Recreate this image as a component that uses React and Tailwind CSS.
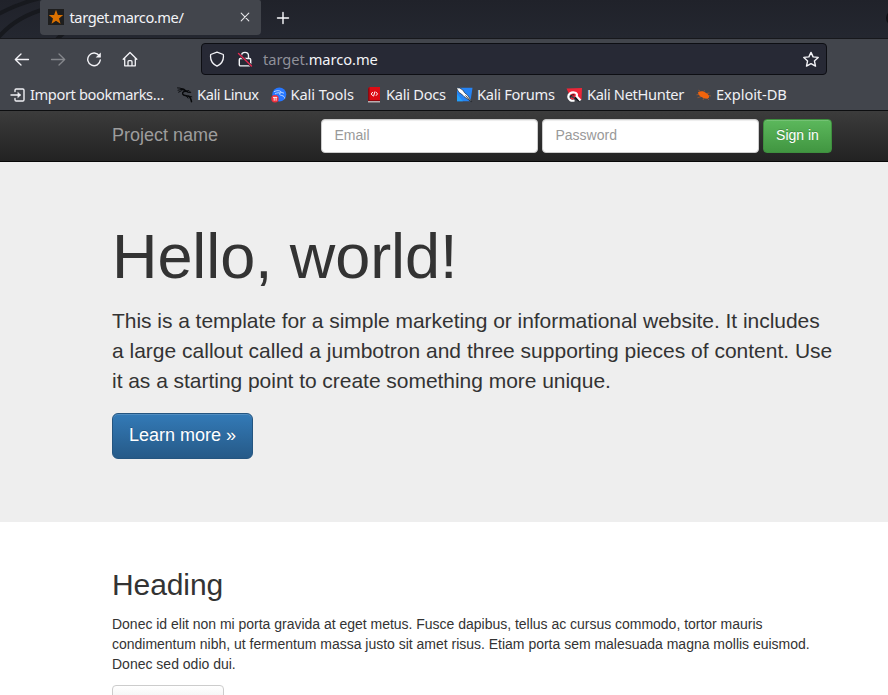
import React from "react";

function KaliDragon() {
  return (
    <svg width="16" height="16" viewBox="0 0 16 16" fill="none" stroke="#08090b" strokeLinecap="round" strokeLinejoin="round">
      <path d="M.5.9 3 1.100l4 1.200M1 3.200l3-.6 3 .4M1.600 5.200 4.500 3.700" strokeWidth=".9" />
      <path d="M4 1.900c2.400 0 4 .8 4.800 2.100" strokeWidth="1.500" />
      <path d="M10.500 4.500C7.500 3.700 5.200 5 5.700 6.900c.7 2 3.400 1.500 5.600 2.300 1.900.7 2.700 2.500 3.200 5.500" strokeWidth="1.500" />
      <path d="m9 4.200 3-.6 1.800 2-3-.2M11.500 9l3.300.8M9.500 9.200l1.500 2" strokeWidth=".9" />
    </svg>
  );
}

function ToolsIcon() {
  return (
    <svg width="16" height="16" viewBox="0 0 16 16" fill="none">
      <circle cx="8.300" cy="7.500" r="7" fill="#2777ff" />
      <path d="M3 4.700c3-1.500 5.500-1.400 7.300.2M4 6.900c2-1.200 4-1.400 6-.8M9.500 5.500c-2 1.500-.8 2.700 1.200 3 2 .3 3 1.500 3 3M10 5.200l3 1" stroke="#c4dcff" strokeWidth=".9" />
      <circle cx="4" cy="11.800" r="3.700" fill="#ed2f3c" />
      <path d="M2 10.400h4.200M3.200 10.500v3.200M5.100 10.500v3.200" stroke="#fff" strokeWidth=".9" />
    </svg>
  );
}

function DocsIcon() {
  return (
    <svg width="16" height="16" viewBox="0 0 16 16" fill="none">
      <path d="M2 1.500 3.500 0H14v14H2z" fill="#dd0c14" />
      <path d="M2 1.500 3.500 0v13H2z" fill="#8c0910" />
      <path d="M2 13h12v2.500H2z" fill="#b9aeb0" />
      <path d="M2 13h12v1H2z" fill="#8c0910" />
      <path d="m6.800 5-1.600 2 1.600 1.800M9.900 5l1.600 1.900-1.600 1.900M9 4.400l-1.500 5" stroke="#fff" strokeWidth="1" />
    </svg>
  );
}

function ForumsIcon() {
  return (
    <svg width="17" height="16" viewBox="0 0 17 16" fill="none">
      <path d="M1 .8h15.500l-2 13.500H1z" fill="#2684f4" />
      <path d="M1 7l6 7.300H1z" fill="#23a0fb" />
      <path d="M.3.8 3.500 1l3.300 2 1.700 2.700 3 2.500 4.300 6.600-5.800-3.800-2-1.500L5.500 7 3 5.500z" fill="#fff" stroke="#17191d" strokeWidth=".6" />
      <path d="m9.500 8.500 5.300 6" stroke="#17191d" strokeWidth=".8" />
    </svg>
  );
}

function NetHunterIcon() {
  return (
    <svg width="17" height="16" viewBox="0 0 17 16" fill="none">
      <path d="M.5 1.500 16 1l-.5 12L8 10 3 7z" fill="#ee2638" />
      <path d="M9 10.500 14 14" stroke="#17191d" strokeWidth="2.500" />
      <path d="M8.500 13.300C5.500 14.600 2.500 12.800 2.300 10c-.2-3 2.700-5 6-4.500 2.300.3 3.300 2 2.300 3.700l3.900 4.300" stroke="#fff" strokeWidth="2.200" />
      <path d="M4.500 10.500c0-2 1.500-3 3.800-2.700" stroke="#17191d" strokeWidth="1" />
      <path d="M5 10.500c.3 1.200 1.500 1.500 2.800 1.100" stroke="#ee2638" strokeWidth="1.500" />
    </svg>
  );
}

function ExploitIcon() {
  return (
    <svg width="16" height="16" viewBox="0 0 16 16" fill="none">
      <path d="M4 4 2.300 3.200M8 4.500 8.500 3.300M10.500 6.500l3-.5M12 8.500l3 .5M11 11l2 2M8 11l-1 2M5.500 9.500l-4 1.200M3 7.500l-2.500.3" stroke="#a35a30" strokeWidth=".8" />
      <path d="M2 5.300C4.500 3.500 8 4 10 6c2 .8 3.500 2.900 3 4.600-1.300 1.700-4.700 1.200-6.500 0C4.300 9.800 2 7.700 2 5.300z" fill="#f2640c" />
    </svg>
  );
}

function ImportIcon() {
  return (
    <svg width="16" height="16" viewBox="0 0 16 16" fill="none" stroke="#f0f0f4" strokeWidth="1.400" strokeLinecap="round" strokeLinejoin="round">
      <path d="M5 4.500V3.200C5 2.500 5.500 2 6.200 2h6.600c.7 0 1.200.5 1.200 1.200v9.600c0 .7-.5 1.200-1.200 1.200H6.200c-.7 0-1.200-.5-1.200-1.200v-1.300M1 8h9" />
      <path d="M8 5.500 10.700 8 8 10.500z" fill="#f0f0f4" strokeWidth=".5" />
    </svg>
  );
}

function Bookmark({ icon, label, width, tracking }) {
  return (
    <div className={`flex shrink-0 items-center gap-1 ${width}`}>
      <span className="mt-0.5 shrink-0">{icon}</span>
      <span className={`whitespace-nowrap ${tracking}`}>{label}</span>
    </div>
  );
}

function TabStrip() {
  return (
    <div className="relative flex h-[39px] overflow-hidden border-b border-[#17181c] bg-linear-to-b from-[#20222a] to-[#242730] pl-10">
      <svg className="absolute top-0 left-0" width="90" height="38" viewBox="0 0 90 38" fill="none" stroke="#17191e">
        <path d="M-3 15Q18 3 45-3M-3 39Q15 17 45 9M57 39l8-7" strokeWidth="4" />
      </svg>
      <div className="relative flex h-[35px] w-[221px] items-center rounded-b-[4px] rounded-t-[2px] bg-[#42454c] pr-[11px] pb-px pl-2">
        <svg width="16" height="16" viewBox="0 0 16 16">
          <path d="M0 0h16v16H0z" fill="#1e1e1e" />
          <path d="m8 .8 1.900 5.200 5.300.1-4.200 3.400 1.500 5.300L8 11.800l-4.500 3 1.500-5.300L.8 6.100 6.100 6z" fill="#db7100" />
        </svg>
        <span className="ml-[5.500px] text-[14.67px] leading-5 tracking-[-0.43px] text-[#f4f4f8]">target.marco.me/</span>
        <svg className="ml-auto" width="10" height="10" viewBox="0 0 10 10" stroke="#e6e6e9" strokeWidth="1.100" strokeLinecap="round">
          <path d="m1.200 1.200 7.600 7.600M8.800 1.200 1.200 8.800" />
        </svg>
      </div>
      <svg className="mt-[10.500px] ml-[14.500px]" width="14" height="14" viewBox="0 0 14 14" stroke="#fbfbfe" strokeWidth="1.400" strokeLinecap="round">
        <path d="M7 1.500v11M1.500 7h11" />
      </svg>
      <span className="absolute top-[10px] left-[886px] size-4 rounded-full bg-[#101116]" />
    </div>
  );
}

function AddressBar() {
  return (
    <div className="flex h-[41px] items-center pb-px pl-[14px] text-[#f4f4f8]">
      <svg width="16" height="16" viewBox="0 0 16 16" fill="none" stroke="currentColor" strokeWidth="1.300" strokeLinecap="round" strokeLinejoin="round">
        <path d="M14.500 8.500h-13M7 3 1.300 8.500 7 14" />
      </svg>
      <svg className="ml-5" width="16" height="16" viewBox="0 0 16 16" fill="none" stroke="#85878c" strokeWidth="1.300" strokeLinecap="round" strokeLinejoin="round">
        <path d="M1.500 8.500h13M9 3l5.700 5.500L9 14" />
      </svg>
      <svg className="ml-5" width="16" height="16" viewBox="0 0 16 16" fill="none" stroke="currentColor" strokeWidth="1.400" strokeLinecap="round">
        <path d="M13.300 4.900A6.300 6.300 0 1 0 14.300 9" />
        <path d="M14.800 1.500v5H9.700z" fill="currentColor" stroke="none" />
      </svg>
      <svg className="ml-[19.500px]" width="16" height="16" viewBox="0 0 16 16" fill="none" stroke="currentColor" strokeWidth="1.300" strokeLinejoin="round" strokeLinecap="round">
        <path d="M1.200 8.300 8 1.500l6.800 6.800M2.700 7.300v7.500h10.600V7.300M6 14.500v-3.800c0-.6.400-1 1-1h2c.6 0 1 .4 1 1v3.800" />
      </svg>
      <div className="ml-[63.500px] flex h-8 w-[626px] items-center rounded-[4px] border border-[#0d0e13] bg-[#272935] pr-[7px] pl-[7px]">
        <svg width="16" height="16" viewBox="0 0 16 16" fill="none" stroke="currentColor" strokeWidth="1.300" strokeLinejoin="round">
          <path d="m8 1.200 6.300 2.300c.8 5.300-1.600 9.300-6.300 11.600C3.300 12.800.9 8.800 1.700 3.500z" />
        </svg>
        <svg className="ml-3" width="16" height="16" viewBox="0 0 16 16" fill="none" stroke="currentColor" strokeWidth="1.400" strokeLinecap="round" strokeLinejoin="round">
          <path d="M4.500 7.500V4.700c0-4.500 7-4.500 7 0v2.800M3.500 7.500h9c.7 0 1.200.5 1.200 1.200v5c0 .7-.5 1.200-1.200 1.200h-9c-.7 0-1.200-.5-1.200-1.200v-5C2.300 8 2.800 7.500 3.500 7.500z" />
          <path d="m1.500 2.500 13 12.500" stroke="#272935" strokeWidth="2.500" />
          <path d="m1.500 2.500 13 12.500" stroke="#e22850" />
        </svg>
        <span className="ml-[10px] text-[14.67px] leading-5 tracking-[-0.04px]"><span className="text-[#90919a]">target.</span>marco.me</span>
        <svg className="ml-auto" width="16" height="16" viewBox="0 0 16 16" fill="none" stroke="currentColor" strokeWidth="1.400" strokeLinejoin="round">
          <path d="m8 1.400 2.100 4.500 5.100.5-3.800 3.500 1.100 5.200L8 12.600l-4.500 2.500 1.100-5.200L.8 6.400l5.100-.5z" />
        </svg>
      </div>
    </div>
  );
}

function BookmarksBar() {
  return (
    <div className="flex h-[30px] items-center pb-0.5 pl-[10px] text-[14.67px] leading-5 text-[#f0f0f4]">
      <Bookmark icon={<ImportIcon />} label="Import bookmarks…" width="w-[167px]" tracking="tracking-[-0.4px]" />
      <Bookmark icon={<KaliDragon />} label="Kali Linux" width="w-[93.500px]" tracking="tracking-[-0.43px]" />
      <Bookmark icon={<ToolsIcon />} label="Kali Tools" width="w-[95.500px]" tracking="tracking-[-0.1px]" />
      <Bookmark icon={<DocsIcon />} label="Kali Docs" width="w-[90px]" tracking="tracking-[-0.28px]" />
      <Bookmark icon={<ForumsIcon />} label="Kali Forums" width="w-[110px]" tracking="tracking-[-0.3px]" />
      <Bookmark icon={<NetHunterIcon />} label="Kali NetHunter" width="w-[130px]" tracking="tracking-[-0.36px]" />
      <Bookmark icon={<ExploitIcon />} label="Exploit-DB" width="w-[100px]" tracking="tracking-[-0.08px]" />
    </div>
  );
}

function Field({ type, label }) {
  return (
    <input
      type={type}
      placeholder={label}
      className="h-[34px] w-[217px] rounded-[4px] border border-[#ccc] bg-white px-[12.500px] pb-0.5 text-[14px] text-[#555] shadow-[inset_0_1px_1px_rgba(0,0,0,0.075)] placeholder:text-[#999]"
    />
  );
}

export default function App() {
  return (
    <div className="h-[695px] w-[888px] overflow-hidden bg-white font-['Liberation_Sans',Arial,sans-serif] text-[14px] leading-5 text-[#333]">
      <header className="h-[111px] border-b border-[#0d0e10] bg-[#42454c] font-['Noto_Sans',sans-serif]">
        <TabStrip />
        <AddressBar />
        <BookmarksBar />
      </header>
      <nav className="flex h-[51px] border-b border-[#080808] bg-linear-to-b from-[#3c3c3c] to-[#222] pt-2 pl-[112px]">
        <a className="mt-1.5 w-[209px] text-[18px] leading-5 text-[#9d9d9d]">Project name</a>
        <form className="flex gap-1">
          <Field type="email" label="Email" />
          <Field type="password" label="Password" />
          <button type="button" className="h-[34px] w-[69px] rounded-[4px] border border-[#3e8f3e] bg-linear-to-b from-[#5cb85c] to-[#419641] pb-0.5 text-[14px] text-white shadow-[inset_0_1px_0_rgba(255,255,255,0.15)] [text-shadow:0_-1px_0_rgba(0,0,0,0.2)]">Sign in</button>
        </form>
      </nav>
      <section className="h-[360px] bg-[#eee] pt-[60px] pl-[112px]">
        <h1 className="h-[84px] text-[63px] leading-[69px] tracking-[-0.1px] whitespace-nowrap">Hello, world!</h1>
        <p className="text-[21px] leading-[30px] whitespace-nowrap">
          <span className="block tracking-[-0.04px]">This is a template for a simple marketing or informational website. It includes</span>
          <span className="block">a large callout called a jumbotron and three supporting pieces of content. Use</span>
          <span className="block tracking-[-0.035px]">it as a starting point to create something more unique.</span>
        </p>
        <button type="button" className="mt-[17px] h-[46px] w-[141px] rounded-[6px] border border-[#245580] bg-linear-to-b from-[#337ab7] to-[#265a88] pb-0.5 text-[18px] text-white shadow-[inset_0_1px_0_rgba(255,255,255,0.15)] [text-shadow:0_-1px_0_rgba(0,0,0,0.2)]">Learn more »</button>
      </section>
      <section className="pt-[46px] pl-[112px]">
        <h2 className="h-[46px] text-[30px] leading-[33px] tracking-[-0.1px]">Heading</h2>
        <p className="whitespace-nowrap">
          <span className="block tracking-[-0.015px]">Donec id elit non mi porta gravida at eget metus. Fusce dapibus, tellus ac cursus commodo, tortor mauris</span>
          <span className="block tracking-[-0.01px]">condimentum nibh, ut fermentum massa justo sit amet risus. Etiam porta sem malesuada magna mollis euismod.</span>
          <span className="block">Donec sed odio dui.</span>
        </p>
        <button type="button" aria-label="View details" className="mt-[11px] block h-[34px] w-[112px] rounded-[4px] border border-[#ccc] bg-linear-to-b from-white to-[#e0e0e0]" />
      </section>
    </div>
  );
}
